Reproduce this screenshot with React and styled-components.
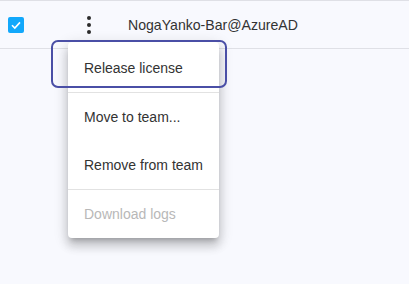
import { createGlobalStyle, styled } from 'styled-components';

const GlobalStyle = createGlobalStyle`
  html, body {
    margin: 0;
    padding: 0;
    background: #f8f9fe;
    font-family: 'Liberation Sans', Arial, sans-serif;
  }
`;

const App = () => {
  return (
    <Page>
      <GlobalStyle />
      <Row>
        <Checkbox>
          <svg width="12" height="12" viewBox="0 0 12 12">
            <path d="M2 6.2 L4.8 9 L10 3.4" fill="none" stroke="#fff" strokeWidth="1.6" />
          </svg>
        </Checkbox>
        <Kebab>
          <Dot />
          <Dot />
          <Dot />
        </Kebab>
        <UserName>NogaYanko-Bar@AzureAD</UserName>
      </Row>
      <Menu>
        <Item>Release license</Item>
        <Divider />
        <Item>Move to team...</Item>
        <Item>Remove from team</Item>
        <Divider />
        <Item disabled>Download logs</Item>
      </Menu>
      <FocusRing />
    </Page>
  );
};

export default App;

const Page = styled.div`
  position: relative;
  width: 409px;
  height: 284px;
  overflow: hidden;
  background: #f8f9fe;
`;

const Row = styled.div`
  display: flex;
  align-items: center;
  height: 47px;
  border-top: 1px solid #dfe0e6;
  border-bottom: 1px solid #dfe0e6;
`;

const Checkbox = styled.div`
  display: flex;
  align-items: center;
  justify-content: center;
  width: 16px;
  height: 16px;
  margin-left: 8px;
  border-radius: 2px;
  background: #12a8fb;
`;

const Kebab = styled.div`
  display: flex;
  flex-direction: column;
  gap: 3px;
  margin-left: 63px;
  margin-top: 1px;
  width: 4px;
`;

const Dot = styled.span`
  width: 4px;
  height: 4px;
  border-radius: 50%;
  background: #2b2b2b;
`;

const UserName = styled.span`
  margin-left: 37px;
  font-size: 14.1px;
  color: #333;
`;

const Menu = styled.div`
  position: absolute;
  left: 68px;
  top: 42px;
  width: 151px;
  padding-top: 2px;
  background: #fff;
  border-radius: 4px;
  box-shadow: 0px 5px 5px -3px rgba(0, 0, 0, 0.2), 0px 8px 10px 1px rgba(0, 0, 0, 0.14),
    0px 3px 14px 2px rgba(0, 0, 0, 0.12);
`;

const Item = styled.div`
  display: flex;
  align-items: center;
  height: 48px;
  padding-left: 16px;
  font-size: 14px;
  color: ${({ disabled }) => (disabled ? '#b8b8b8' : '#333')};
`;

const Divider = styled.div`
  height: 1px;
  background: #e2e2e2;
`;

const FocusRing = styled.div`
  position: absolute;
  left: 51px;
  top: 40px;
  width: 172px;
  height: 44px;
  border: 2px solid #4a4fa6;
  border-radius: 7px;
  pointer-events: none;
`;
